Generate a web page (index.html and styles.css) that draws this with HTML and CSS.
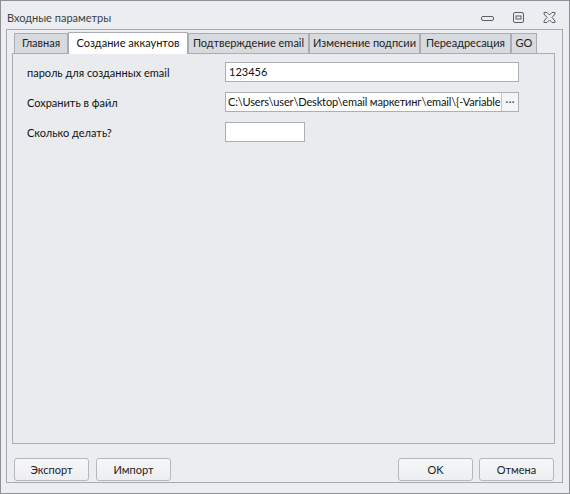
FILE: index.html
```html
<!DOCTYPE html>
<html lang="ru">
<head>
  <meta charset="UTF-8">
  <title>Входные параметры</title>
  <link rel="stylesheet" href="styles.css">
</head>
<body>

  <div class="window">
    <div class="titlebar">
      <span class="title">Входные параметры</span>
      <div class="controls">
        <svg width="13" height="11" viewBox="0 0 13 11"><rect x="0.5" y="4.5" width="12" height="4" rx="1.5" fill="none" stroke="#5a5f66"/></svg>
        <svg width="13" height="11" viewBox="0 0 13 11"><rect x="1.5" y="0.5" width="10" height="10" rx="1.5" fill="none" stroke="#5a5f66"/><rect x="4" y="4" width="5" height="3" fill="none" stroke="#5a5f66"/></svg>
        <svg width="13" height="11" viewBox="0 0 13 11"><path d="M1 0.5h3l2.5 2.5 2.5-2.5h3v1.5l-3 3.5 3 3.5v1.5h-3l-2.5-2.5-2.5 2.5h-3v-1.5l3-3.5-3-3.5z" fill="none" stroke="#5a5f66"/></svg>
      </div>
    </div>

    <div class="frame">
      <div class="tabs">
        <div class="tab">Главная</div>
        <div class="tab active">Создание аккаунтов</div>
        <div class="tab">Подтверждение email</div>
        <div class="tab">Изменение подпсии</div>
        <div class="tab">Переадресация</div>
        <div class="tab">GO</div>
      </div>

      <div class="page">
        <div class="form">
          <label>пароль для созданных email</label>
          <div class="field">123456</div>

          <label>Сохранить в файл</label>
          <div class="field with-button">
            <span class="value">C:\Users\user\Desktop\email маркетинг\email\{-Variable</span>
            <span class="dots">···</span>
          </div>

          <label>Сколько делать?</label>
          <div class="field short"></div>
        </div>
      </div>

      <div class="buttons">
        <button>Экспорт</button>
        <button>Импорт</button>
        <span class="spacer"></span>
        <button>OK</button>
        <button>Отмена</button>
      </div>
    </div>
  </div>

</body>
</html>
```

FILE: styles.css
```css
/* Reset */
* {
  margin: 0;
  padding: 0;
  box-sizing: border-box;
}

body {
  font-family: 'Lato', 'Noto Sans', sans-serif;
  font-size: 11px;
  color: #111;
  background: #ebedf0;
}

/* Dialog window */
.window {
  width: 570px;
  height: 494px;
  border: 1px solid #8d9197;
  background: #ebedf0;
  display: flex;
  flex-direction: column;
}

.titlebar {
  height: 28px;
  display: flex;
  align-items: center;
  padding-left: 6px;
  flex-shrink: 0;
}

.title {
  color: #3c3f44;
  margin-top: 4px;
}

.controls {
  margin-left: auto;
  display: flex;
  gap: 18px;
  padding-right: 13px;
  margin-top: 4px;
}

/* Outer group box */
.frame {
  flex: 1;
  margin: 0 6px 10px 5px;
  border: 1px solid #a6a9ae;
  display: flex;
  flex-direction: column;
}

/* Tab strip */
.tabs {
  display: flex;
  align-items: flex-end;
  height: 23px;
  padding-left: 7px;
  position: relative;
  z-index: 1;
}

.tab {
  height: 20px;
  line-height: 18px;
  text-align: center;
  background: #d7dadf;
  border: 1px solid #a9acb2;
  border-bottom: none;
  color: #222;
  white-space: nowrap;
}

.tab:nth-child(1) { width: 54px; }
.tab:nth-child(2) { width: 120px; }
.tab:nth-child(3) { width: 121px; }
.tab:nth-child(4) { width: 111px; }
.tab:nth-child(5) { width: 91px; }
.tab:nth-child(6) { width: 26px; }

.tab.active {
  height: 22px;
  background: #fff;
  margin-bottom: -1px;
  line-height: 20px;
  color: #111;
}

/* Tab page */
.page {
  height: 391px;
  margin: 0 7px 0 5px;
  border: 1px solid #a9acb2;
  background: #e9ebee;
}

.form {
  display: grid;
  grid-template-columns: 198px 294px;
  row-gap: 10px;
  align-items: center;
  padding: 8px 0 0 14px;
}

.field {
  height: 20px;
  border: 1px solid #acafb4;
  background: #fff;
  padding: 0 3px;
  line-height: 18px;
  white-space: nowrap;
  overflow: hidden;
}

.field.with-button {
  display: flex;
  padding: 0 0 0 2px;
}

.field .value {
  flex: 1;
  overflow: hidden;
  letter-spacing: -0.15px;
}

.field .dots {
  width: 17px;
  flex-shrink: 0;
  border-left: 1px solid #c3c6cb;
  background: #f4f5f7;
  text-align: center;
  font-size: 12px;
  color: #555;
}

.field.short {
  width: 80px;
}

/* Bottom buttons */
.buttons {
  display: flex;
  gap: 7px;
  margin-top: 14px;
  padding: 0 8px 0 7px;
}

.spacer {
  flex: 1;
}

button {
  width: 75px;
  height: 23px;
  font-family: inherit;
  font-size: 11px;
  color: #222;
  border: 1px solid #b4b7bd;
  border-radius: 3px;
  background: linear-gradient(#f6f7f8, #eceef1);
}

.buttons button:last-child {
  margin-left: -1px;
}
```
